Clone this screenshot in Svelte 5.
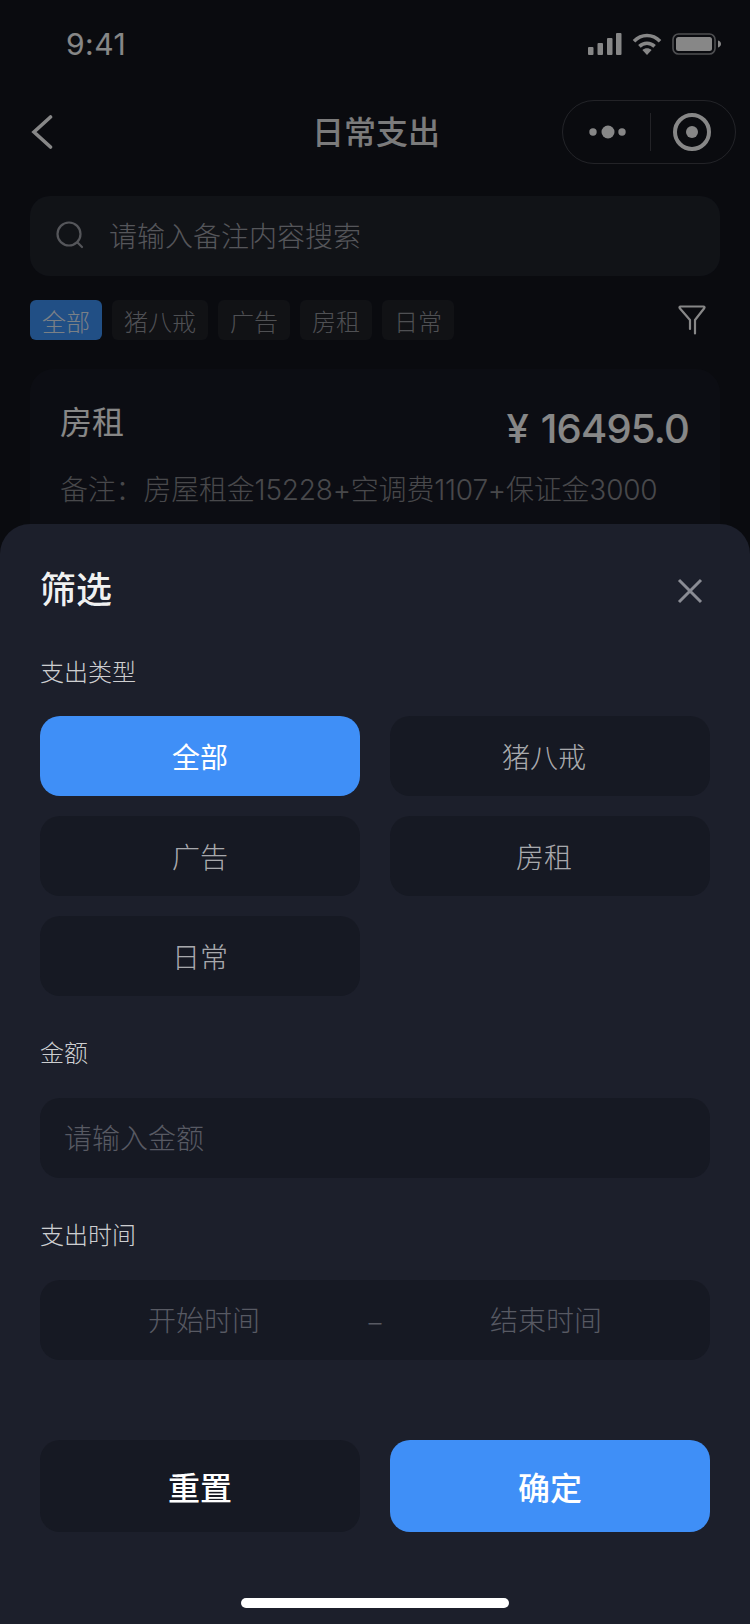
<script lang="ts">
	const tags = ['全部', '猪八戒', '广告', '房租', '日常'];
	const types = ['全部', '猪八戒', '广告', '房租', '日常'];
</script>

<div class="page">
	<div class="status">
		<span class="time">9:41</span>
		<div class="status-icons">
			<svg viewBox="0 0 34 22" width="34" height="22" fill="currentColor">
				<rect x="0" y="14" width="5.5" height="8" rx="1" />
				<rect x="9.5" y="10" width="5.5" height="12" rx="1" />
				<rect x="19" y="5" width="5.5" height="17" rx="1" />
				<rect x="28" y="0" width="5.5" height="22" rx="1" />
			</svg>
			<svg viewBox="0 0 30 22" width="30" height="22" fill="none" stroke="currentColor" stroke-width="3.6">
				<path d="M2 8.2C9.5 .6 20.5 .6 28 8.2" />
				<path d="M7.4 13.4C11.7 9.2 18.3 9.2 22.6 13.4" />
				<path d="M15 22l-4.6-5c2.6-2.2 6.6-2.2 9.2 0z" fill="currentColor" stroke="none" />
			</svg>
			<svg viewBox="0 0 49 22" width="49" height="22">
				<rect x="1" y="1" width="42" height="20" rx="5.5" fill="none" stroke="currentColor" stroke-opacity=".55" stroke-width="1.6" />
				<rect x="4" y="4" width="36" height="14" rx="2.5" fill="currentColor" />
				<path d="M46 7.500c1.800.6 3 1.900 3 3.500s-1.200 2.900-3 3.500z" fill="currentColor" />
			</svg>
		</div>
	</div>

	<div class="nav">
		<svg class="back" viewBox="0 0 22 36" width="22" height="36" fill="none" stroke="currentColor" stroke-width="3.6" stroke-linecap="round">
			<path d="M19.5 3 3 18l16.500 15" />
		</svg>
		<h1>日常支出</h1>
		<div class="capsule">
			<svg viewBox="0 0 40 14" width="40" height="14" fill="currentColor">
				<circle cx="5" cy="7" r="3.7" />
				<circle cx="20" cy="7" r="6.5" />
				<circle cx="34" cy="7" r="3.7" />
			</svg>
			<span class="capsule-line"></span>
			<svg viewBox="0 0 38 38" width="38" height="38">
				<circle cx="19" cy="19" r="17" fill="none" stroke="currentColor" stroke-width="4" />
				<circle cx="19" cy="19" r="6" fill="currentColor" />
			</svg>
		</div>
	</div>

	<div class="search">
		<svg viewBox="0 0 28 28" width="28" height="28" fill="none" stroke="currentColor" stroke-width="2.2" stroke-linecap="round">
			<circle cx="13" cy="13" r="11.5" />
			<path d="M22 22l4 4" />
		</svg>
		<span>请输入备注内容搜索</span>
	</div>

	<div class="tags">
		{#each tags as tag, i}
			<span class="tag" class:active={i === 0}>{tag}</span>
		{/each}
		<svg class="funnel" viewBox="0 0 28 30" width="28" height="30" fill="none" stroke="currentColor" stroke-width="2.2" stroke-linecap="round" stroke-linejoin="round">
			<path d="M12 24V15L1.800 3.200a1 1 0 0 1 .8-1.700h22.800a1 1 0 0 1 .8 1.700L17 15v13.500" />
		</svg>
	</div>

	<div class="card">
		<div class="card-head">
			<span class="card-title">房租</span>
			<span class="card-amount">¥ 16495.0</span>
		</div>
		<p class="card-note">备注：房屋租金15228+空调费1107+保证金3000</p>
	</div>
</div>

<div class="overlay">
	<div class="sheet">
		<div class="sheet-head">
			<h2>筛选</h2>
			<svg class="close" viewBox="0 0 26 26" width="26" height="26" fill="none" stroke="currentColor" stroke-width="3">
				<path d="M2 2l22 22M24 2 2 24" />
			</svg>
		</div>

		<div class="label first">支出类型</div>
		<div class="options">
			{#each types as type, i}
				<div class="option" class:selected={i === 0}>{type}</div>
			{/each}
		</div>

		<div class="label">金额</div>
		<div class="field">请输入金额</div>

		<div class="label">支出时间</div>
		<div class="field range">
			<span>开始时间</span>
			<span class="dash">–</span>
			<span>结束时间</span>
		</div>

		<div class="actions">
			<div class="action">重置</div>
			<div class="action primary">确定</div>
		</div>

		<div class="home"></div>
	</div>
</div>

<style>
	:global(body) {
		background: #13151e;
		font-family: Inter, "Noto Sans CJK SC", sans-serif;
	}

	.page {
		height: 1624px;
		box-sizing: border-box;
		padding: 0 30px;
		background: #13151e;
		color: #fff;
		overflow: hidden;
	}

	.status {
		display: flex;
		justify-content: space-between;
		align-items: center;
		height: 88px;
		margin: 0 -1px 0 36px;
	}

	.time {
		font-size: 30px;
		letter-spacing: 0.5px;
	}

	.status-icons {
		display: flex;
		align-items: center;
		gap: 10px;
	}

	.nav {
		position: relative;
		display: flex;
		align-items: center;
		justify-content: space-between;
		height: 64px;
		margin-top: 12px;
	}

	.back {
		margin-left: 1px;
	}

	h1 {
		position: absolute;
		left: 2px;
		right: 0;
		top: 10px;
		margin: 0;
		text-align: center;
		color: rgba(255, 255, 255, 0.92);
		font-size: 32px;
		line-height: 46px;
		font-weight: 500;
	}

	.capsule {
		display: flex;
		align-items: center;
		justify-content: space-between;
		box-sizing: border-box;
		width: 174px;
		height: 64px;
		margin-right: -16px;
		padding: 0 24px 0 25px;
		border: 1px solid rgba(255, 255, 255, 0.2);
		border-radius: 32px;
	}

	.capsule-line {
		width: 1px;
		height: 38px;
		background: rgba(255, 255, 255, 0.2);
	}

	.search {
		display: flex;
		align-items: center;
		gap: 25px;
		height: 80px;
		box-sizing: border-box;
		margin-top: 32px;
		padding: 0 26px 2px;
		border-radius: 20px;
		background: #20242d;
		color: #a0a2aa;
		font-size: 28px;
		font-weight: 300;
	}

	.tags {
		display: flex;
		align-items: center;
		gap: 10px;
		margin-top: 24px;
	}

	.tag {
		display: flex;
		align-items: center;
		justify-content: center;
		height: 40px;
		padding: 0 12px;
		border-radius: 6px;
		background: #202229;
		color: #95979e;
		font-size: 24px;
		font-weight: 300;
	}

	.tag.active {
		background: #3f95fb;
		color: rgba(255, 255, 255, 0.9);
	}

	.funnel {
		margin-left: auto;
		margin-right: 14px;
	}

	.card {
		height: 300px;
		margin-top: 29px;
		padding: 31px 31px;
		border-radius: 24px;
		background: #181a24;
	}

	.card-head {
		display: flex;
		justify-content: space-between;
		align-items: flex-start;
	}

	.card-title {
		margin-left: -1px;
		font-size: 32px;
		line-height: 46px;
		font-weight: 400;
	}

	.card-amount {
		font-size: 40px;
		line-height: 58px;
		font-weight: 500;
		letter-spacing: -0.8px;
		word-spacing: 3px;
	}

	.card-note {
		margin: 10px 0 0 -1px;
		color: #88898f;
		font-size: 28px;
		font-weight: 300;
		letter-spacing: -0.2px;
	}

	.overlay {
		position: fixed;
		inset: 0;
		display: flex;
		flex-direction: column;
		justify-content: flex-end;
		background: rgba(0, 0, 0, 0.47);
	}

	.sheet {
		box-sizing: border-box;
		height: 1100px;
		padding: 0 40px;
		border-radius: 30px 30px 0 0;
		background: #1c1f2b;
		color: #fff;
	}

	.sheet-head {
		display: flex;
		align-items: center;
		justify-content: space-between;
		height: 50px;
		padding: 40px 7px 0 0;
		color: #8a8c94;
	}

	.close {
		margin-top: 4px;
	}

	h2 {
		margin: 2px 0 0;
		color: rgba(255, 255, 255, 0.95);
		font-size: 36px;
		line-height: 50px;
		font-weight: 500;
	}

	.label {
		margin-top: 40px;
		margin-bottom: 26px;
		color: rgba(255, 255, 255, 0.8);
		font-size: 24px;
		line-height: 36px;
		font-weight: 300;
	}

	.label.first {
		margin-top: 41px;
		margin-bottom: 25px;
	}

	.options {
		display: grid;
		grid-template-columns: 1fr 1fr;
		gap: 20px 30px;
	}

	.option {
		display: flex;
		align-items: center;
		justify-content: center;
		height: 80px;
		border-radius: 20px;
		background: #161923;
		color: rgba(255, 255, 255, 0.65);
		font-size: 28px;
		font-weight: 300;
	}

	.option:nth-child(even) {
		padding-right: 12px;
	}

	.option.selected {
		background: #3f8ff7;
		color: #fff;
		font-weight: 400;
	}

	.field {
		display: flex;
		align-items: center;
		box-sizing: border-box;
		height: 80px;
		padding: 0 24px 3px;
		border-radius: 20px;
		background: #161923;
		color: #585a63;
		font-size: 28px;
		font-weight: 300;
	}

	.range {
		justify-content: space-between;
		padding: 0 108px 3px;
	}

	.dash {
		font-size: 26px;
		padding-top: 7px;
	}

	.actions {
		display: grid;
		grid-template-columns: 1fr 1fr;
		gap: 30px;
		margin-top: 80px;
	}

	.action {
		display: flex;
		align-items: center;
		justify-content: center;
		height: 92px;
		border-radius: 20px;
		background: #161923;
		font-size: 32px;
		font-weight: 500;
	}

	.action.primary {
		background: #3f8ff7;
	}

	.home {
		width: 268px;
		height: 10px;
		margin: 66px auto 0;
		border-radius: 5px;
		background: #fff;
	}
</style>
